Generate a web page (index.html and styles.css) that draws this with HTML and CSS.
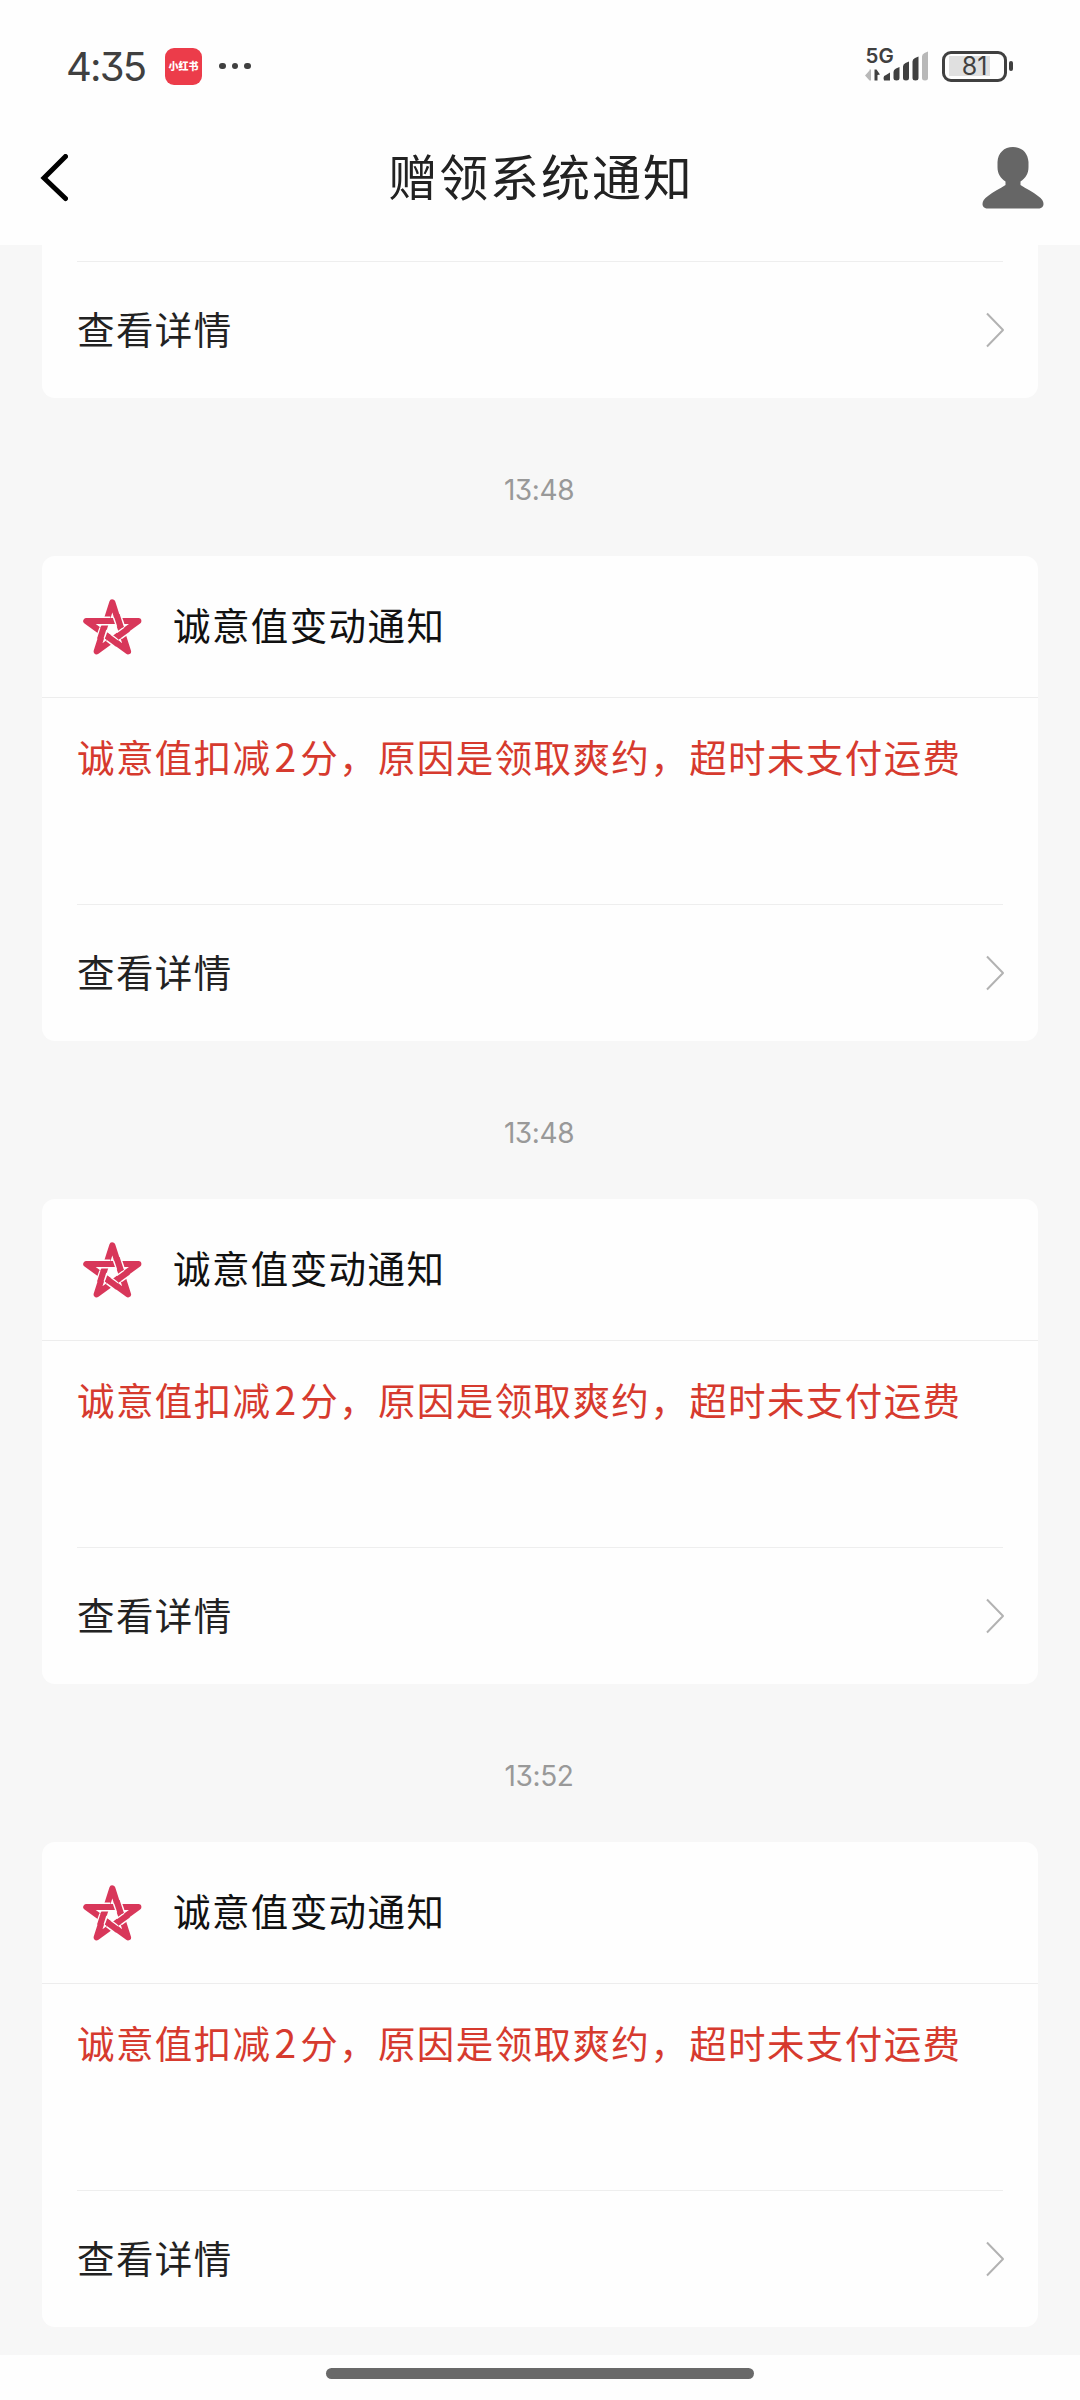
FILE: index.html
```
<!DOCTYPE html>
<html lang="zh-CN">
<head>
  <meta charset="UTF-8" />
  <meta name="viewport" content="width=device-width, initial-scale=1" />
  <title>赠领系统通知</title>
  <link rel="stylesheet" href="styles.css">
</head>
<body>

<!-- Shared icons -->
<svg class="sprite" aria-hidden="true">
  <symbol id="star" viewBox="60 80 195 180">
    <path class="strap" d="M157 96 L204 243 L79 152 L235 152 L110 243 Z" />
    <path class="gap" d="M125 152 H151 M171.5 139 L180.5 165 M199 180 L177 196 M168 218 L146 202 M122 201 L131 175" />
    <path class="strap" d="M118 152 H159 M170 134 L183 173 M204 176 L170 201 M174 222 L140 197 M120 207 L132 169" />
  </symbol>
  <symbol id="arrow" viewBox="0 0 20 36">
    <path d="M2 1.5 L18 18 L2 34.5" fill="none" stroke="#b2b2b2" stroke-width="2" stroke-linejoin="round" />
  </symbol>
</svg>

<div class="status-bar">
  <span class="clock">4:35</span>
  <span class="app-badge">小红书</span>
  <span class="dots"><i></i><i></i><i></i></span>
  <svg class="signal" viewBox="0 -6 66 52" width="66" height="52">
    <text x="0.5" y="17" class="net">5G</text>
    <path d="M0 29.5 L4.5 24.5 V23.5 H6 V34.5 H4.5 Z" fill="#b8b8b8" />
    <path d="M9.5 23.5 H11.5 L15 28.5 L12.5 29 V34.5 H9.5 Z" />
    <path d="M18.5 32 Q18.5 29.5 21 29 L25 26.5 V34.5 H19 Z" />
    <path d="M28.500 26 Q28.500 23.5 31 22.5 L34.5 21 V32 Q34.5 34.5 31.5 34.5 Q28.500 34.5 28.500 32 Z" />
    <path d="M38 20.5 Q38 18 40.500 17 L44 15.5 V32 Q44 34.5 41 34.5 Q38 34.5 38 32 Z" />
    <path d="M47.500 15.5 Q47.500 13 50 12 L53.5 10.5 V32 Q53.5 34.5 50.5 34.5 Q47.500 34.5 47.500 32 Z" />
    <path d="M57 10.5 Q57 8 59.500 7 L63 5.5 V32 Q63 34.5 60 34.5 Q57 34.5 57 32 Z" fill="#b8b8b8" />
  </svg>
  <span class="battery"><b>81</b></span>
  <span class="battery-tip"></span>
</div>

<div class="nav-bar">
  <svg class="back" viewBox="0 0 28 48" width="28" height="48">
    <path d="M25.500 2.500 L4 24 L25.500 44.500" />
  </svg>
  <h1>赠领系统通知</h1>
  <svg class="avatar" viewBox="0 0 62 62" width="62" height="62">
    <path d="M31 0 C40 0 46 6 46.500 15 V20 C46.500 27 43.500 31 38.500 34.500 V38 C44 42 51 44.500 56 49 C60 52 61.500 54 61.500 57 C61.500 60 59 61.500 56.500 61.500 H5.500 C3 61.500 .5 60 .5 57 C.5 54 2 52 6 49 C11 44.500 18 42 23.500 38 V34.500 C18.500 31 15.500 27 15.500 20 V15 C16 6 22 0 31 0 Z" />
  </svg>
</div>

<div class="messages">
  <div class="card card-cut">
    <div class="card-link"><span>查看详情</span><svg class="arrow"><use href="#arrow" /></svg></div>
  </div>

  <div class="time">13:48</div>
  <div class="card">
    <div class="card-title"><svg class="star"><use href="#star" /></svg><span>诚意值变动通知</span></div>
    <div class="card-body">诚意值扣减<span class="num">2</span>分，原因是领取爽约，超时未支付运费</div>
    <div class="card-link"><span>查看详情</span><svg class="arrow"><use href="#arrow" /></svg></div>
  </div>

  <div class="time">13:48</div>
  <div class="card">
    <div class="card-title"><svg class="star"><use href="#star" /></svg><span>诚意值变动通知</span></div>
    <div class="card-body">诚意值扣减<span class="num">2</span>分，原因是领取爽约，超时未支付运费</div>
    <div class="card-link"><span>查看详情</span><svg class="arrow"><use href="#arrow" /></svg></div>
  </div>

  <div class="time">13:52</div>
  <div class="card">
    <div class="card-title"><svg class="star"><use href="#star" /></svg><span>诚意值变动通知</span></div>
    <div class="card-body">诚意值扣减<span class="num">2</span>分，原因是领取爽约，超时未支付运费</div>
    <div class="card-link"><span>查看详情</span><svg class="arrow"><use href="#arrow" /></svg></div>
  </div>
</div>

<div class="home-area"><div class="home-bar"></div></div>

</body>
</html>
```
FILE: styles.css
```
* {
  box-sizing: border-box;
}

body {
  margin: 0;
  width: 1080px;
  height: 2400px;
  overflow: hidden;
  background: #fefefe;
  font-family: "Noto Sans CJK SC", sans-serif;
  color: #222;
}

svg {
  display: block;
  flex: none;
}

.sprite {
  display: none;
}

/* Status bar */
.status-bar {
  display: flex;
  align-items: center;
  height: 132px;
  padding-left: 66px;
  color: #404040;
}

.clock {
  width: 99px;
  font-family: Inter, sans-serif;
  font-size: 40px;
  font-weight: 400;
  letter-spacing: -1.8px;
  font-feature-settings: "cv09";
}

.app-badge {
  width: 37px;
  height: 37px;
  border-radius: 9px;
  background: #ec3c4a;
  color: #fff;
  font-size: 10px;
  font-weight: 900;
  line-height: 36px;
  text-align: center;
  white-space: nowrap;
}

.dots {
  display: flex;
  gap: 6px;
  margin-left: 17px;
}

.dots i {
  width: 6.5px;
  height: 6.5px;
  border-radius: 50%;
  background: #404040;
}

.signal {
  margin-left: auto;
  fill: #404040;
}

.net {
  font-family: Inter, sans-serif;
  font-size: 20.5px;
  font-weight: 600;
}

.battery {
  display: flex;
  align-items: center;
  justify-content: center;
  width: 65px;
  height: 31px;
  margin-left: 11px;
  border: 3px solid #404040;
  border-radius: 9px;
  background: linear-gradient(#e0e0e0, #e0e0e0) 4px 2.5px / 41px 20px no-repeat;
}

.battery b {
  font-family: Inter, sans-serif;
  font-size: 25px;
  font-weight: 400;
  line-height: 25px;
}

.battery-tip {
  width: 4px;
  height: 10px;
  margin: 0 67px 0 2px;
  border-radius: 2px;
  background: #404040;
}

/* Navigation */
.nav-bar {
  display: flex;
  align-items: center;
  justify-content: space-between;
  height: 113px;
  padding: 0 36px 21px 40px;
}

.nav-bar h1 {
  margin: 0 0 6px 32px;
  font-size: 49px;
  font-weight: 400;
  line-height: 60px;
  letter-spacing: 1.9px;
}

.back path {
  fill: none;
  stroke: #000;
  stroke-width: 5;
  stroke-linecap: round;
}

.avatar {
  fill: #666;
}

/* Message list */
.messages {
  height: 2110px;
  padding: 0 42px;
  background: #f7f7f7;
}

.time {
  height: 158px;
  padding-right: 2px;
  font-family: Inter, sans-serif;
  font-size: 28px;
  line-height: 184px;
  letter-spacing: -0.4px;
  text-align: center;
  color: #999;
  font-feature-settings: "cv09";
}

.card {
  height: 485px;
  border-radius: 13px;
  background: #fefefe;
  font-size: 37.5px;
  letter-spacing: 1.4px;
}

.card-cut {
  height: 153px;
  padding-top: 16px;
  border-radius: 0 0 13px 13px;
}

.card-title {
  display: flex;
  align-items: center;
  height: 142px;
  padding-left: 38px;
  border-bottom: 1px solid #ededed;
  color: #111;
}

.card-title span {
  padding-bottom: 6px;
}

.card-link span {
  padding: 0 0 4px 1px;
}

.star {
  width: 65px;
  height: 60px;
  margin: 0 28px 0 0;
}

.strap,
.gap {
  fill: none;
  stroke: #d8375a;
  stroke-width: 18.5;
  stroke-linejoin: round;
}

.gap {
  stroke: #fefefe;
  stroke-width: 27;
}

.card-body {
  height: 206px;
  padding: 29px 0 0 35px;
  line-height: 56px;
  white-space: nowrap;
  color: #d63a2e;
}

.num {
  margin-left: 3px;
  font-size: 39px;
  letter-spacing: 4px;
}

.card-link {
  display: flex;
  align-items: center;
  justify-content: space-between;
  height: 137px;
  margin: 0 33px 0 34px;
  background: linear-gradient(#eee, #eee) 1px 0 / 926px 1px no-repeat;
}

.arrow {
  width: 20px;
  height: 36px;
}

/* Home indicator */
.home-area {
  height: 45px;
  padding-top: 13px;
}

.home-bar {
  width: 428px;
  height: 11px;
  margin: 0 auto;
  border-radius: 6px;
  background: #696969;
}
```
